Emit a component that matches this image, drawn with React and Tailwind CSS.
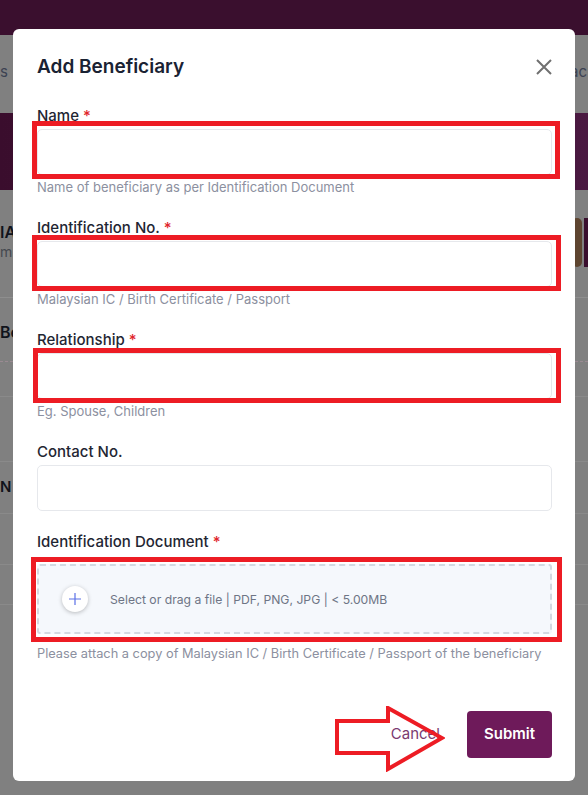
import React from "react";

const font = { fontFamily: "Inter, 'Noto Sans', sans-serif" };

function Mark({ className }) {
  // red hand-drawn annotation box over a field
  return (
    <span
      className={`pointer-events-none absolute border-[5px] border-[#ed1c24] ${className}`}
    />
  );
}

function Label({ text, required }) {
  return (
    <label className="block h-5 text-[15px] leading-5 font-medium text-[#1f2633]">
      {text}
      {required && <span className="ml-1 text-[#e0242b]">*</span>}
    </label>
  );
}

function Field({ label, required, hint, mark, top = "mt-[23px]" }) {
  return (
    <div className={top}>
      <Label text={label} required={required} />
      <div className="relative mt-[3px]">
        <input
          type="text"
          className="block h-[46px] w-full rounded-[5px] border border-[#e6e8ec] bg-white px-3 outline-none"
        />
        {mark && <Mark className={mark} />}
      </div>
      {hint && (
        <p className="mt-1 h-4 text-[13px] leading-4 text-[#8c90a0]">{hint}</p>
      )}
    </div>
  );
}

function Backdrop() {
  return (
    <div className="flex h-[795px] w-[588px] flex-col bg-[#808080]">
      <div className="h-[35px] bg-[#3a0f2e]" />
      <div className="flex h-[78px] items-center justify-between text-[15px] text-[#3c4252]">
        <span className="-mt-1">s</span>
        <span className="-mt-1 pr-[1px]">ac</span>
      </div>
      <div className="h-[77px] bg-gradient-to-r from-[#3a0d2d] to-[#4a1941]" />
      <div className="flex h-[108px] items-start justify-between border-b border-[#8e8e8e]">
        <div className="pt-[32px]">
          <div className="text-[16px] leading-5 font-semibold text-[#10131b]">IA</div>
          <div className="text-[14px] leading-5 text-[#45484f]">m</div>
        </div>
        <div className="flex gap-[2px] pt-[28px]">
          <div className="h-[49px] w-[10px] rounded-md bg-[#5e4530]" />
          <div className="h-[49px] w-[4px] bg-[#3a0f2e]" />
        </div>
      </div>
      <div className="flex h-[64px] items-center border-b border-dashed border-[#9a8a92]">
        <span className="pt-1 text-[16px] font-semibold text-[#10131b]">Be</span>
      </div>
      <div className="h-[35px] border-b border-[#8a8a8a]" />
      <div className="h-[65px] border-b border-[#8a8a8a]" />
      <div className="flex h-[52px] items-center border-b border-[#8a8a8a]">
        <span className="text-[15px] font-semibold text-[#10131b]">N</span>
      </div>
      <div className="h-[51px] border-b border-[#8a8a8a]" />
      <div className="h-[40px] border-b border-[#8a8a8a]" />
    </div>
  );
}

export default function App() {
  return (
    <div className="relative h-[795px] w-[588px] overflow-hidden" style={font}>
      <Backdrop />

      <div className="absolute left-[13px] top-[29px] w-[562px] rounded-md bg-white pb-[23px] pl-6 pr-[23px] pt-[26px]">
        <div className="flex h-6 items-center justify-between">
          <h2 className="text-[19px] leading-6 font-semibold text-[#1a2233]">
            Add Beneficiary
          </h2>
          <svg width="16" height="16" viewBox="0 0 16 16" className="text-[#707070]">
            <path d="M1 1L15 15M15 1L1 15" stroke="currentColor" strokeWidth="2" />
          </svg>
        </div>

        <Field
          top="mt-[27px]"
          label="Name"
          required
          hint="Name of beneficiary as per Identification Document"
          mark="-left-[5px] -top-[8px] -right-[8px] -bottom-[4px]"
        />
        <Field
          label="Identification No."
          required
          hint="Malaysian IC / Birth Certificate / Passport"
          mark="-left-[5px] -top-[6px] -right-[9px] -bottom-[4px]"
        />
        <Field
          label="Relationship"
          required
          hint="Eg. Spouse, Children"
          mark="-left-[4px] -top-[5px] -right-[9px] -bottom-[4px]"
        />
        <Field label="Contact No." />

        <div className="mt-[21px]">
          <Label text="Identification Document" required />
          <div className="relative mt-3">
            <div className="flex h-[70px] items-center rounded-[3px] border-2 border-dashed border-[#d3d9e1] bg-[#f5f8fc] pl-[23px]">
              <span className="flex h-[26px] w-[26px] items-center justify-center rounded-full bg-white shadow-[0_1px_4px_rgba(0,0,0,0.25)]">
                <svg width="14" height="14" viewBox="0 0 14 14">
                  <path d="M7 1V13M1 7H13" stroke="#5b70e6" strokeWidth="1.2" />
                </svg>
              </span>
              <span className="ml-[22px] pt-[2px] text-[12.2px] text-[#6e7585]">
                Select or drag a file | PDF, PNG, JPG | &lt; 5.00MB
              </span>
            </div>
            <Mark className="-left-[6px] -top-[7px] -right-[10px] -bottom-[8px]" />
          </div>
          <p className="mt-3 h-4 text-[12.8px] leading-4 text-[#8c90a0]">
            Please attach a copy of Malaysian IC / Birth Certificate / Passport of the beneficiary
          </p>
        </div>

        <div className="relative mt-[49px] flex items-center justify-end gap-[11px]">
          <button className="px-4 text-[15px] text-[#7b3a6f]">Cancel</button>
          <button className="h-[47px] w-[85px] rounded-[4px] bg-[#6e1a5a] text-[15px] font-semibold text-white">
            Submit
          </button>
          <svg
            width="110"
            height="66"
            viewBox="0 0 110 66"
            className="pointer-events-none absolute -top-[5px] right-[107px]"
          >
            <path
              d="M2 15H53V2L107 32L53 63V47H2Z"
              fill="none"
              stroke="#ed1c24"
              strokeWidth="4"
              strokeLinejoin="miter"
            />
          </svg>
        </div>
      </div>
    </div>
  );
}
